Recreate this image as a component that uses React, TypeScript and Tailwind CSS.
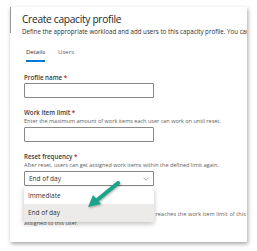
const font = { fontFamily: '"Open Sans", "Noto Sans", Arial, sans-serif' };

const Label = ({ text }: { text: string }) => (
  <div className="text-[6.2px] leading-[9px] font-semibold text-[#3b3a39]">
    {text} <span className="text-[#a4262c]">*</span>
  </div>
);

const Hint = ({ text }: { text: string }) => (
  <div className="text-[5.5px] leading-[8px] text-[#605e5c] whitespace-nowrap">{text}</div>
);

const TextBox = () => (
  <div className="w-[130px] h-[15px] border border-[#8a8886] rounded-[1px] bg-white" />
);

const App = () => {
  return (
    <div className="w-[257px] h-[251px] bg-white overflow-hidden" style={font}>
      <div className="relative ml-[10px] mt-[7px] w-[237px] h-[235px] bg-white shadow-[1px_2px_4px_rgba(0,0,0,0.35)] overflow-hidden">
        <div className="absolute left-0 top-0 w-[1px] h-[26px] bg-[#9a9896]" />

        <div className="pl-[12px] pt-[5px]">
          <h1 className="text-[10.2px] leading-[14px] tracking-[-0.3px] text-[#201f1e]">
            Create capacity profile
          </h1>
          <p className="mt-[1px] text-[6.2px] leading-[10px] text-[#323130] whitespace-nowrap">
            Define the appropriate workload and add users to this capacity profile. You can change these settings at any time.
          </p>

          <div className="mt-[10px] ml-[4px] flex gap-[13px] text-[6px] leading-[10px]">
            <div className="pb-[3px] border-b-2 border-[#0078d4] text-[#323130]">Details</div>
            <div className="pb-[3px] text-[#605e5c]">Users</div>
          </div>

          <div className="pl-[2px]">
            <div className="mt-[11px]">
              <Label text="Profile name" />
              <div className="mt-[1px]">
                <TextBox />
              </div>
            </div>

            <div className="mt-[10px]">
              <Label text="Work item limit" />
              <Hint text="Enter the maximum amount of work items each user can work on until reset." />
              <div className="mt-[2px]">
                <TextBox />
              </div>
            </div>

            <div className="mt-[10px]">
              <Label text="Reset frequency" />
              <Hint text="After reset, users can get assigned work items within the defined limit again." />
              <div className="mt-[2px] w-[130px] h-[15px] border border-[#8a8886] rounded-[1px] bg-white flex items-center justify-between px-[4px]">
                <span className="text-[6.5px] text-[#323130]">End of day</span>
                <svg width="6" height="4" viewBox="0 0 6 4" fill="none">
                  <path d="M0.5 0.7 L3 3.2 L5.5 0.7" stroke="#8a8886" strokeWidth="0.7" />
                </svg>
              </div>
            </div>

            <div className="mt-[24px]">
              <div className="text-[5.5px] leading-[9px] tracking-[0.1px] text-[#605e5c] whitespace-nowrap">
                Work items are no longer assigned once the user reaches the work item limit of this capacity profile. No more work items will be
              </div>
              <div className="text-[5.5px] leading-[9px] text-[#605e5c] whitespace-nowrap">
                assigned to this user.
              </div>
            </div>
          </div>
        </div>

        <div className="absolute left-[14px] top-[180px] w-[130px] bg-white shadow-[0_2px_5px_rgba(0,0,0,0.25)] text-[6.5px] text-[#323130]">
          <div className="h-[17px] flex items-center px-[4px]">Immediate</div>
          <div className="h-[18px] flex items-center px-[4px] bg-[#edebe9]">End of day</div>
        </div>

        <svg
          className="absolute left-[74px] top-[172px]"
          width="40"
          height="32"
          viewBox="0 0 40 32"
          style={{ filter: "drop-shadow(1px 1px 1px rgba(0,0,0,0.3))" }}
        >
          <path d="M34 4 L12 22" stroke="#1aa58a" strokeWidth="4" strokeLinecap="round" />
          <polygon points="4,28 9,16 17,25" fill="#1aa58a" />
        </svg>
      </div>
    </div>
  );
};

export default App;
